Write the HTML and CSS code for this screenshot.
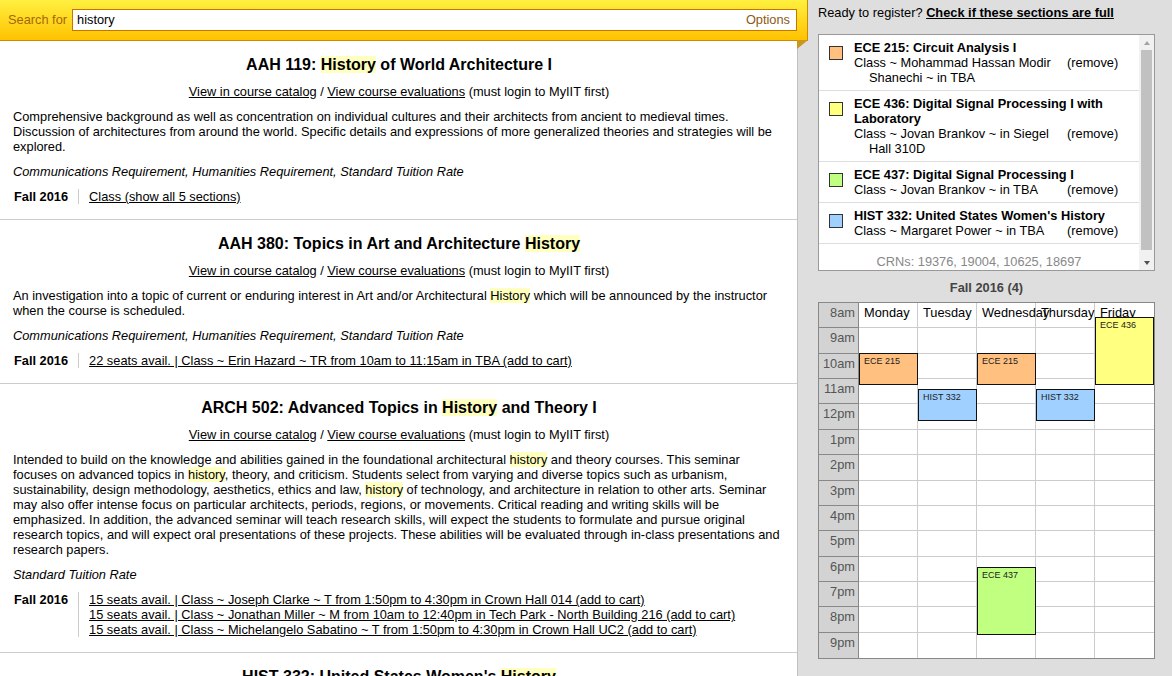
FILE: index.html
```html
<!DOCTYPE html>
<html lang="en">
<head>
<meta charset="utf-8">
<title>Course search</title>
<link rel="stylesheet" href="styles.css">
</head>
<body>
<div class="page">
  <div class="results">
    <header class="searchbar">
      <label class="search-label" for="q">Search for</label>
      <div class="searchbox">
        <input id="q" class="search-input" type="text" value="history">
        <span class="options">Options</span>
      </div>
    </header>

    <section class="course">
      <h2 class="course-title">AAH 119: <span class="hl">History</span> of World Architecture I</h2>
      <p class="links"><a href="#">View in course catalog</a> / <a href="#">View course evaluations</a> (must login to MyIIT first)</p>
      <p class="desc">Comprehensive background as well as concentration on individual cultures and their architects from ancient to medieval times. Discussion of architectures from around the world. Specific details and expressions of more generalized theories and strategies will be explored.</p>
      <p class="attrs">Communications Requirement, Humanities Requirement, Standard Tuition Rate</p>
      <div class="term">
        <div class="term-name">Fall 2016</div>
        <div class="sections">
          <a href="#">Class (show all 5 sections)</a>
        </div>
      </div>
    </section>

    <section class="course">
      <h2 class="course-title">AAH 380: Topics in Art and Architecture <span class="hl">History</span></h2>
      <p class="links"><a href="#">View in course catalog</a> / <a href="#">View course evaluations</a> (must login to MyIIT first)</p>
      <p class="desc">An investigation into a topic of current or enduring interest in Art and/or Architectural <span class="hl">History</span> which will be announced by the instructor when the course is scheduled.</p>
      <p class="attrs">Communications Requirement, Humanities Requirement, Standard Tuition Rate</p>
      <div class="term">
        <div class="term-name">Fall 2016</div>
        <div class="sections">
          <a href="#">22 seats avail. | Class ~ Erin Hazard ~ TR from 10am to 11:15am in TBA (add to cart)</a>
        </div>
      </div>
    </section>

    <section class="course">
      <h2 class="course-title">ARCH 502: Advanced Topics in <span class="hl">History</span> and Theory I</h2>
      <p class="links"><a href="#">View in course catalog</a> / <a href="#">View course evaluations</a> (must login to MyIIT first)</p>
      <p class="desc">Intended to build on the knowledge and abilities gained in the foundational architectural <span class="hl">history</span> and theory courses. This seminar focuses on advanced topics in <span class="hl">history</span>, theory, and criticism. Students select from varying and diverse topics such as urbanism, sustainability, design methodology, aesthetics, ethics and law, <span class="hl">history</span> of technology, and architecture in relation to other arts. Seminar may also offer intense focus on particular architects, periods, regions, or movements. Critical reading and writing skills will be emphasized. In addition, the advanced seminar will teach research skills, will expect the students to formulate and pursue original research topics, and will expect oral presentations of these projects. These abilities will be evaluated through in-class presentations and research papers.</p>
      <p class="attrs">Standard Tuition Rate</p>
      <div class="term">
        <div class="term-name">Fall 2016</div>
        <div class="sections">
          <a href="#">15 seats avail. | Class ~ Joseph Clarke ~ T from 1:50pm to 4:30pm in Crown Hall 014 (add to cart)</a>
          <a href="#">15 seats avail. | Class ~ Jonathan Miller ~ M from 10am to 12:40pm in Tech Park - North Building 216 (add to cart)</a>
          <a href="#">15 seats avail. | Class ~ Michelangelo Sabatino ~ T from 1:50pm to 4:30pm in Crown Hall UC2 (add to cart)</a>
        </div>
      </div>
    </section>

    <section class="course">
      <h2 class="course-title">HIST 332: United States Women's <span class="hl">History</span></h2>
      <p class="links"><a href="#">View in course catalog</a> / <a href="#">View course evaluations</a> (must login to MyIIT first)</p>
      <p class="desc">A survey of the history of women in the United States.</p>
    </section>
  </div>

  <aside class="sidebar">
    <p class="register">Ready to register? <a href="#" class="check">Check if these sections are full</a></p>

    <div class="cart">
      <div class="cart-list">
        <div class="item">
          <span class="swatch c-orange"></span>
          <div class="info">
            <div class="item-title">ECE 215: Circuit Analysis I</div>
            <div class="item-row">
              <span class="sec">Class ~ Mohammad Hassan Modir Shanechi ~ in TBA</span>
              <span class="rm">(remove)</span>
            </div>
          </div>
        </div>
        <div class="item">
          <span class="swatch c-yellow"></span>
          <div class="info">
            <div class="item-title">ECE 436: Digital Signal Processing I with Laboratory</div>
            <div class="item-row">
              <span class="sec">Class ~ Jovan Brankov ~ in Siegel Hall 310D</span>
              <span class="rm">(remove)</span>
            </div>
          </div>
        </div>
        <div class="item">
          <span class="swatch c-green"></span>
          <div class="info">
            <div class="item-title">ECE 437: Digital Signal Processing I</div>
            <div class="item-row">
              <span class="sec">Class ~ Jovan Brankov ~ in TBA</span>
              <span class="rm">(remove)</span>
            </div>
          </div>
        </div>
        <div class="item">
          <span class="swatch c-blue"></span>
          <div class="info">
            <div class="item-title">HIST 332: United States Women's History</div>
            <div class="item-row">
              <span class="sec">Class ~ Margaret Power ~ in TBA</span>
              <span class="rm">(remove)</span>
            </div>
          </div>
        </div>
        <div class="crns">CRNs: 19376, 19004, 10625, 18697</div>
      </div>
      <div class="scrollbar">
        <div class="sb-btn"><span class="tri-up"></span></div>
        <div class="sb-thumb"></div>
        <div class="sb-space"></div>
        <div class="sb-btn"><span class="tri-down"></span></div>
      </div>
    </div>

    <h3 class="cal-title">Fall 2016 (4)</h3>

    <div class="cal">
      <div class="cal-grid">
        <div class="t">8am</div><div class="d">Monday</div><div class="d">Tuesday</div><div class="d">Wednesday</div><div class="d">Thursday</div><div class="d">Friday</div>
        <div class="t">9am</div><div class="d"></div><div class="d"></div><div class="d"></div><div class="d"></div><div class="d"></div>
        <div class="t">10am</div><div class="d"></div><div class="d"></div><div class="d"></div><div class="d"></div><div class="d"></div>
        <div class="t">11am</div><div class="d"></div><div class="d"></div><div class="d"></div><div class="d"></div><div class="d"></div>
        <div class="t">12pm</div><div class="d"></div><div class="d"></div><div class="d"></div><div class="d"></div><div class="d"></div>
        <div class="t">1pm</div><div class="d"></div><div class="d"></div><div class="d"></div><div class="d"></div><div class="d"></div>
        <div class="t">2pm</div><div class="d"></div><div class="d"></div><div class="d"></div><div class="d"></div><div class="d"></div>
        <div class="t">3pm</div><div class="d"></div><div class="d"></div><div class="d"></div><div class="d"></div><div class="d"></div>
        <div class="t">4pm</div><div class="d"></div><div class="d"></div><div class="d"></div><div class="d"></div><div class="d"></div>
        <div class="t">5pm</div><div class="d"></div><div class="d"></div><div class="d"></div><div class="d"></div><div class="d"></div>
        <div class="t">6pm</div><div class="d"></div><div class="d"></div><div class="d"></div><div class="d"></div><div class="d"></div>
        <div class="t">7pm</div><div class="d"></div><div class="d"></div><div class="d"></div><div class="d"></div><div class="d"></div>
        <div class="t">8pm</div><div class="d"></div><div class="d"></div><div class="d"></div><div class="d"></div><div class="d"></div>
        <div class="t">9pm</div><div class="d"></div><div class="d"></div><div class="d"></div><div class="d"></div><div class="d"></div>
      </div>
      <div class="ev c-orange" style="left:40px;top:50px;height:32px">ECE 215</div>
      <div class="ev c-orange" style="left:158px;top:50px;height:32px">ECE 215</div>
      <div class="ev c-blue" style="left:99px;top:86px;height:32px">HIST 332</div>
      <div class="ev c-blue" style="left:217px;top:86px;height:32px">HIST 332</div>
      <div class="ev c-yellow" style="left:276px;top:14px;height:68px">ECE 436</div>
      <div class="ev c-green" style="left:158px;top:264px;height:68px">ECE 437</div>
    </div>
  </aside>
</div>
</body>
</html>
```

FILE: styles.css
```css
html, body {
  margin: 0;
  padding: 0;
}
body {
  font-family: "Liberation Sans", Arial, sans-serif;
  font-size: 12.8px;
  line-height: 15px;
  color: #000;
  overflow: hidden;
  height: 676px;
  background: #dedede;
}
a {
  color: #000;
  text-decoration: underline;
}

.page {
  display: flex;
  height: 676px;
}

/* ---------- left results panel ---------- */
.results {
  width: 797px;
  flex: none;
  background: #fff;
  border-right: 1px solid #c0c0c0;
}

.searchbar {
  position: relative;
  z-index: 2;
  box-sizing: border-box;
  width: calc(100% + 11px);
  height: 41px;
  display: flex;
  align-items: center;
  gap: 5px;
  padding: 0 10px 1px 8px;
  background: linear-gradient(#fff040, #ffc200);
  border-bottom: 1px solid #d08a00;
  border-right: 1px solid #d08a00;
}
.searchbar::after {
  content: "";
  position: absolute;
  top: 100%;
  right: -1px;
  width: 0;
  height: 0;
  border-top: 9px solid #c9961e;
  border-right: 11px solid transparent;
}
.search-label {
  color: #a5670a;
}
.searchbox {
  flex: 1;
  height: 22px;
  box-sizing: border-box;
  display: flex;
  align-items: center;
  background: #fff;
  border: 1px solid #c87400;
  padding: 0 6px 0 4px;
}
.search-input {
  flex: 1;
  border: 0;
  outline: 0;
  padding: 0;
  margin: 0;
  font: inherit;
  color: #000;
  background: transparent;
  min-width: 0;
}
.options {
  color: #8b5a14;
}

.course {
  padding: 14px 12px 15px 13px;
  border-bottom: 1px solid #ccc;
}
.course-title {
  margin: 0;
  font-size: 16px;
  line-height: 19px;
  font-weight: bold;
  text-align: center;
}
.course p {
  margin: 10px 0 0;
}
.links {
  text-align: center;
}
.attrs {
  font-style: italic;
}
.hl {
  background: #ffffbf;
}
.term {
  display: flex;
  margin-top: 10px;
}
.term-name {
  font-weight: bold;
  padding: 0 10px 0 1px;
  border-right: 1px solid #ccc;
}
.sections {
  padding-left: 10px;
  display: flex;
  flex-direction: column;
}

/* ---------- sidebar ---------- */
.sidebar {
  flex: 1;
  background: #dedede;
  padding: 5px 17px 0 20px;
}
.register {
  margin: 0;
}
.check {
  font-weight: bold;
}

.cart {
  margin-top: 14px;
  height: 237px;
  box-sizing: border-box;
  border: 1px solid #999;
  background: #fff;
  display: flex;
  overflow: hidden;
}
.cart-list {
  flex: 1;
  min-width: 0;
}
.item {
  display: flex;
  padding: 5px 10px;
  border-bottom: 1px solid #ddd;
}
.swatch {
  flex: none;
  width: 14px;
  height: 14px;
  box-sizing: border-box;
  border: 1px solid #333;
  margin: 6px 11px 0 0;
}
.info {
  flex: 1;
}
.item-title {
  font-weight: bold;
}
.item-row {
  display: grid;
  grid-template-columns: 205px auto;
  column-gap: 8px;
}
.sec {
  padding-left: 15px;
  text-indent: -15px;
}
.crns {
  text-align: center;
  color: #888;
  padding: 10px 0;
}

.scrollbar {
  flex: none;
  width: 15px;
  background: #f1f1f1;
  display: flex;
  flex-direction: column;
}
.sb-btn {
  height: 15px;
  display: flex;
  align-items: center;
  justify-content: center;
}
.tri-up {
  width: 0;
  height: 0;
  border-left: 3.5px solid transparent;
  border-right: 3.5px solid transparent;
  border-bottom: 4px solid #a3a3a3;
}
.tri-down {
  width: 0;
  height: 0;
  border-left: 3.5px solid transparent;
  border-right: 3.5px solid transparent;
  border-top: 4px solid #505050;
}
.sb-thumb {
  height: 200px;
  margin: 0 2px;
  background: #c1c1c1;
}
.sb-space {
  flex: 1;
}

.cal-title {
  margin: 9px 0 0;
  font-size: 12.8px;
  line-height: 15px;
  font-weight: bold;
  text-align: center;
  color: #444;
}

.cal {
  position: relative;
  margin-top: 7px;
  height: 357px;
  box-sizing: border-box;
  border: 1px solid #888;
  background: #fff;
}
.cal-grid {
  display: grid;
  grid-template-columns: 40px 59px 59px 59px 59px 59px;
  grid-template-rows: repeat(14, 1fr);
  height: 100%;
}
.t {
  background: #d3d3d3;
  color: #555;
  text-align: right;
  padding: 2px 3px 0 0;
  border-right: 1px solid #888;
  border-bottom: 1px solid #888;
}
.d {
  padding: 2px 0 0 5px;
  white-space: nowrap;
  border-right: 1px solid #ccc;
  border-bottom: 1px solid #ccc;
}
.d:nth-child(6n) {
  border-right: 0;
}
.cal-grid > :nth-last-child(-n+6) {
  border-bottom: 0;
}

.ev {
  position: absolute;
  width: 59px;
  box-sizing: border-box;
  border: 1px solid #111;
  font-size: 9px;
  line-height: 11px;
  padding: 2px 4px;
  color: #222;
}

.c-orange { background: #ffc080; }
.c-yellow { background: #ffff80; }
.c-green { background: #c0ff80; }
.c-blue { background: #a0d0ff; }
```
